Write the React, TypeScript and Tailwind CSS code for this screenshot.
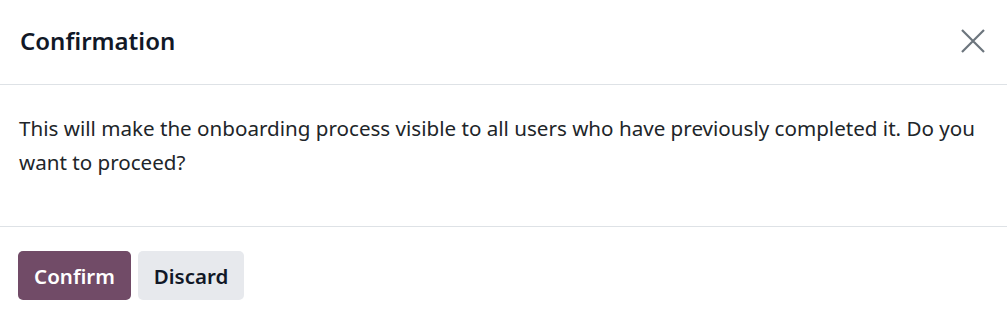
import React from "react";

export default function App() {
  return (
    <div className="w-[1007px] h-[318px] bg-white text-[#212529] flex flex-col" style={{ fontFamily: '"Noto Sans", "Open Sans", sans-serif' }}>
      <div className="h-[85px] border-b border-[#dee2e6] flex items-center justify-between pl-[20px] pr-[22px] pb-[3px] shrink-0">
        <h1 className="text-[24px] font-semibold text-[#111827]">Confirmation</h1>
        <button className="w-[24px] h-[24px] flex items-center justify-center text-[#6c757d]">
          <svg width="24" height="24" viewBox="0 0 24 24" fill="none" stroke="currentColor" strokeWidth="2.2">
            <path d="M1 1 L23 23 M23 1 L1 23" />
          </svg>
        </button>
      </div>
      <div className="h-[142px] border-b border-[#dee2e6] px-[19px] pt-[26px] shrink-0">
        <p className="text-[20.6px] leading-[34px] text-[#212529]">
          This will make the onboarding process visible to all users who have previously completed it. Do you want to proceed?
        </p>
      </div>
      <div className="flex gap-[7px] px-[18px] pt-[24px]">
        <button className="h-[49px] w-[113px] rounded-[5px] bg-[#714b67] text-white text-[20.5px] font-semibold pt-[2px]">Confirm</button>
        <button className="h-[49px] w-[106px] rounded-[5px] bg-[#e7e9ed] text-[#111827] text-[20.5px] font-semibold pt-[2px]">Discard</button>
      </div>
    </div>
  );
}
